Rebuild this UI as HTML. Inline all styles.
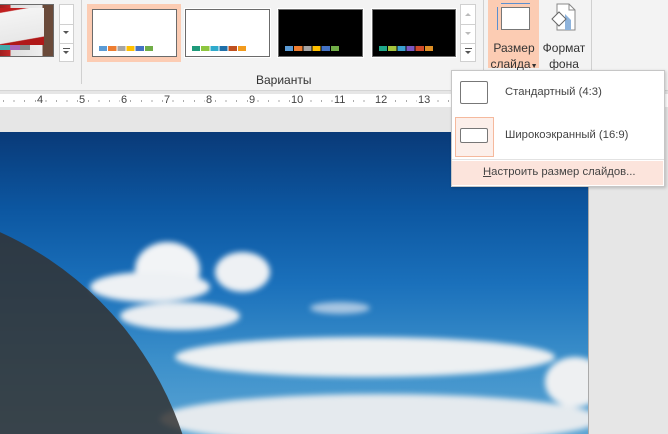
<!DOCTYPE html>
<html><head><meta charset="utf-8"><style>
*{margin:0;padding:0;box-sizing:border-box}
html{overflow:hidden;width:668px;height:434px}
body{width:668px;height:434px;overflow:hidden;position:relative;background:#e6e6e6;font-family:"Liberation Sans","DejaVu Sans",sans-serif;}
.a{position:absolute}
.th{position:absolute;border:1px solid #6b6b6b;background:#fff;outline:1px solid #fff}
.sw{position:absolute;height:5px;top:36px}
.ruler{font-size:11px;color:#444}
</style></head><body>
<div class="a" style="left:0;top:0;width:668px;height:91px;background:#f3f3f3;border-bottom:1px solid #d5d5d5"></div>
<div class="a" style="left:0;top:4px;width:54px;height:53px;border:1px solid #6b6b6b;border-left:none;background:linear-gradient(90deg,#a02020 0,#c42a2a 20%,#ddd 20%,#eee 80%,#6a4a3a 80%);"></div>
<div class="a" style="left:0;top:8px;width:44px;height:37px;background:linear-gradient(170deg,#c02020 0,#c02020 10%,#f4f4f4 12%,#e8e8e8 80%,#b01818 82%)"></div>
<div class="a" style="left:0;top:45px;width:30px;height:5px;background:linear-gradient(90deg,#4aa 0,#4aa 33%,#a6b 33%,#a6b 66%,#888 66%)"></div>
<div class="a" style="left:59px;top:4px;width:15px;height:58px;border:1px solid #d0d0d0;background:#fff"></div>
<div class="a" style="left:59px;top:24px;width:15px;height:1px;background:#d0d0d0"></div>
<div class="a" style="left:59px;top:43px;width:15px;height:1px;background:#d0d0d0"></div>
<div class="a" style="left:63px;top:31px;border:3px solid transparent;border-top:3px solid #555"></div>
<div class="a" style="left:63px;top:48px;width:7px;height:1px;background:#555"></div>
<div class="a" style="left:63px;top:51px;border:3px solid transparent;border-top:3px solid #555"></div>
<div class="a" style="left:81px;top:0;width:1px;height:84px;background:#d0d0d0"></div>
<div class="a" style="left:87px;top:4px;width:94px;height:58px;background:#fcccb3"></div>
<div class="th" style="left:92px;top:9px;width:85px;height:48px;outline:none"><div class="sw" style="left:6px;width:54px;background:linear-gradient(90deg,#5b9bd5 0 15%,transparent 15% 17%,#ed7d31 17% 32%,transparent 32% 34%,#a5a5a5 34% 49%,transparent 49% 51%,#ffc000 51% 66%,transparent 66% 68%,#4472c4 68% 83%,transparent 83% 85%,#70ad47 85%)"></div></div>
<div class="th" style="left:185px;top:9px;width:85px;height:48px"><div class="sw" style="left:6px;width:54px;background:linear-gradient(90deg,#1f9a7a 0 15%,transparent 15% 17%,#8dc63f 17% 32%,transparent 32% 34%,#2eaacc 34% 49%,transparent 49% 51%,#1f6fa8 51% 66%,transparent 66% 68%,#c0501f 68% 83%,transparent 83% 85%,#f29b1d 85%)"></div></div>
<div class="th" style="left:278px;top:9px;width:85px;height:48px;background:#000"><div class="sw" style="left:6px;width:54px;background:linear-gradient(90deg,#5b9bd5 0 15%,transparent 15% 17%,#ed7d31 17% 32%,transparent 32% 34%,#a5a5a5 34% 49%,transparent 49% 51%,#ffc000 51% 66%,transparent 66% 68%,#4472c4 68% 83%,transparent 83% 85%,#70ad47 85%)"></div></div>
<div class="th" style="left:372px;top:9px;width:84px;height:48px;background:#000"><div class="sw" style="left:6px;width:54px;background:linear-gradient(90deg,#1fa88a 0 15%,transparent 15% 17%,#a4c43c 17% 32%,transparent 32% 34%,#3aa0d0 34% 49%,transparent 49% 51%,#7b56c2 51% 66%,transparent 66% 68%,#cf4a2a 68% 83%,transparent 83% 85%,#de8f25 85%)"></div></div>
<div class="a" style="left:460px;top:4px;width:16px;height:58px;border:1px solid #d0d0d0;background:#fff"></div>
<div class="a" style="left:460px;top:24px;width:16px;height:1px;background:#d0d0d0"></div>
<div class="a" style="left:460px;top:43px;width:16px;height:1px;background:#d0d0d0"></div>
<div class="a" style="left:465px;top:10px;border:3px solid transparent;border-bottom:3px solid #bbb"></div>
<div class="a" style="left:465px;top:32px;border:3px solid transparent;border-top:3px solid #bbb"></div>
<div class="a" style="left:465px;top:48px;width:7px;height:1px;background:#555"></div>
<div class="a" style="left:465px;top:51px;border:3px solid transparent;border-top:3px solid #555"></div>
<div class="a" style="left:256px;top:73px;font-size:12px;color:#333">Варианты</div>
<div class="a" style="left:483px;top:0;width:1px;height:84px;background:#d0d0d0"></div>
<div class="a" style="left:488px;top:0;width:51px;height:68px;background:#fcccb3"></div>
<div class="a" style="left:501px;top:7px;width:29px;height:23px;background:#fff;border:1px solid #777"></div>
<div class="a" style="left:501px;top:3px;width:29px;height:1px;background:#5b8fd0"></div>
<div class="a" style="left:497px;top:7px;width:1px;height:23px;background:#5b8fd0"></div>
<div class="a" style="left:489px;top:40px;font-size:12px;color:#333;line-height:16px;text-align:center;width:50px">Размер<br>слайда<span style="font-size:7px">▼</span></div>
<svg class="a" style="left:549px;top:2px" width="30" height="32" viewBox="0 0 30 32"><path d="M8 2h12l6 6v20H8z" fill="#fff" stroke="#888"/><path d="M20 2v6h6" fill="none" stroke="#888"/><path d="M16 12l6 6v10h-6z" fill="#8fb4dc"/><path d="M3 17l7-7 7 7-7 7z" fill="#fff" stroke="#666"/></svg>
<div class="a" style="left:540px;top:40px;font-size:12px;color:#333;line-height:16px;text-align:center;width:48px">Формат<br>фона</div>
<div class="a" style="left:591px;top:0;width:1px;height:84px;background:#d0d0d0"></div>
<div class="a" style="left:0;top:94px;width:668px;height:13px;background:#fff"></div>
<div class="a" style="left:0;top:100px;width:450px;height:2px;background:repeating-linear-gradient(90deg,transparent 0 3px,#aaa 3px 4px,transparent 4px 10.6px)"></div>
<div class="a ruler" style="left:0;top:94px;width:668px;height:13px">
<span class="a" style="left:36px;background:#fff;padding:0 1px">4</span><span class="a" style="left:78px;background:#fff;padding:0 1px">5</span><span class="a" style="left:120px;background:#fff;padding:0 1px">6</span><span class="a" style="left:163px;background:#fff;padding:0 1px">7</span><span class="a" style="left:205px;background:#fff;padding:0 1px">8</span><span class="a" style="left:248px;background:#fff;padding:0 1px">9</span><span class="a" style="left:290px;background:#fff;padding:0 1px">10</span><span class="a" style="left:333px;background:#fff;padding:0 1px">11</span><span class="a" style="left:374px;background:#fff;padding:0 1px">12</span><span class="a" style="left:417px;background:#fff;padding:0 1px">13</span>
</div>
<div class="a" style="left:0;top:132px;width:589px;height:302px;overflow:hidden;background:linear-gradient(180deg,#093a78 0%,#0c56a0 25%,#1a70bb 50%,#3b8fca 75%,#5aa4d4 100%);border-right:1px solid #aaa">
<div class="a" style="left:0;top:0;width:589px;height:302px;filter:blur(3px)">
<div class="a" style="left:135px;top:110px;width:65px;height:55px;border-radius:50%;background:#f2f4f6"></div>
<div class="a" style="left:90px;top:140px;width:120px;height:30px;border-radius:50%;background:#eef1f4"></div>
<div class="a" style="left:215px;top:120px;width:55px;height:40px;border-radius:50%;background:#eef1f4"></div>
<div class="a" style="left:120px;top:170px;width:120px;height:28px;border-radius:50%;background:#eaeef2"></div>
<div class="a" style="left:175px;top:205px;width:380px;height:40px;border-radius:50%;background:#edf0f2"></div>
<div class="a" style="left:545px;top:225px;width:60px;height:50px;border-radius:50%;background:#eef0f2"></div>
<div class="a" style="left:160px;top:262px;width:440px;height:50px;border-radius:50%;background:#e5eaee"></div>
<div class="a" style="left:310px;top:170px;width:60px;height:12px;border-radius:50%;background:#a8c6e2"></div>
</div>
<div class="a" style="left:-480px;top:70px;width:680px;height:680px;border-radius:50%;background:rgba(50,50,50,0.85)"></div>
</div>
<div class="a" style="left:451px;top:70px;width:214px;height:117px;background:#fff;border:1px solid #c6c6c6;box-shadow:1px 1px 3px rgba(0,0,0,.2)"></div>
<div class="a" style="left:460px;top:81px;width:28px;height:23px;border:1px solid #777;border-radius:2px"></div>
<div class="a" style="left:505px;top:86px;font-size:11.3px;color:#444">Стандартный (4:3)</div>
<div class="a" style="left:455px;top:117px;width:39px;height:40px;background:#fcefea;border:1px solid #f5b99d"></div>
<div class="a" style="left:460px;top:128px;width:28px;height:15px;border:1px solid #777;border-radius:2px;background:#fff"></div>
<div class="a" style="left:505px;top:129px;font-size:11.3px;color:#444">Широкоэкранный (16:9)</div>
<div class="a" style="left:452px;top:159px;width:212px;height:1px;background:#e2e2e2"></div>
<div class="a" style="left:452px;top:161px;width:211px;height:24px;background:#fce4dc"></div>
<div class="a" style="left:483px;top:166px;font-size:11.3px;color:#444"><u>Н</u>астроить размер слайдов...</div>
</body></html>
